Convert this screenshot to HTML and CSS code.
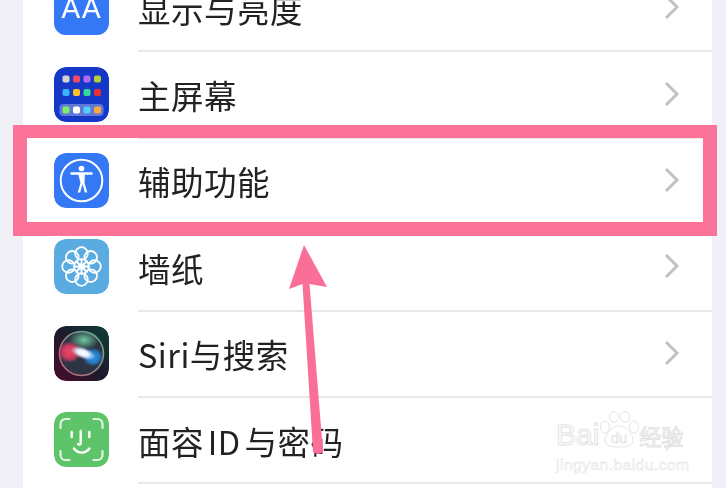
FILE: index.html
```html
<!DOCTYPE html>
<html lang="zh-CN">
<head>
  <meta charset="UTF-8" />
  <meta name="viewport" content="width=device-width, initial-scale=1.0"/>
  <title>设置</title>
  <link rel="stylesheet" href="styles.css">
</head>
<body>
  <div class="list">
    <div class="row">
      <div class="icon icon-display">AA</div>
      <div class="row-body">
        <span class="label">显示与亮度</span>
        <svg class="chevron" viewBox="0 0 16 26"><path d="M2 2l11 11L2 24"/></svg>
      </div>
    </div>
    <div class="row">
      <svg class="icon" viewBox="0 0 55 55">
        <rect width="55" height="55" rx="12" fill="#1638c8"/>
        <rect x="8.500" y="8.500" width="7" height="7" rx="2" fill="#d4d4cc"/>
        <rect x="19" y="8.500" width="7" height="7" rx="2" fill="#f04a68"/>
        <rect x="29.500" y="8.500" width="7" height="7" rx="2" fill="#b068f2"/>
        <rect x="40" y="8.500" width="7" height="7" rx="2" fill="#b4d03a"/>
        <rect x="8.500" y="22" width="7" height="7" rx="2" fill="#38b4f8"/>
        <rect x="19" y="22" width="7" height="7" rx="2" fill="#fcc020"/>
        <rect x="29.500" y="22" width="7" height="7" rx="2" fill="#38d898"/>
        <rect x="40" y="22" width="7" height="7" rx="2" fill="#ea3030"/>
        <rect x="5.500" y="37" width="44" height="12" rx="4" fill="#5f79d8"/>
        <rect x="8.500" y="39.500" width="7" height="7" rx="2" fill="#80ec68"/>
        <rect x="19" y="39.500" width="7" height="7" rx="2" fill="#fff"/>
        <rect x="29.500" y="39.500" width="7" height="7" rx="2" fill="#58ccff"/>
        <rect x="40" y="39.500" width="7" height="7" rx="2" fill="#fca840"/>
      </svg>
      <div class="row-body">
        <span class="label">主屏幕</span>
        <svg class="chevron" viewBox="0 0 16 26"><path d="M2 2l11 11L2 24"/></svg>
      </div>
    </div>
    <div class="row">
      <svg class="icon" viewBox="0 0 55 55">
        <rect width="55" height="55" rx="12" fill="#3478f6"/>
        <circle cx="27.500" cy="27.500" r="20.800" fill="none" stroke="#fff" stroke-width="2"/>
        <circle cx="27.500" cy="15.500" r="2.800" fill="#fff"/>
        <path d="M17.500 20.500h20" fill="none" stroke="#fff" stroke-width="2.400" stroke-linecap="round"/>
        <path d="M24 20h7l-.5 10 2.800 9.500h-2.500l-2.300-8.500-2.300 8.500h-2.500l2.800-9.500z" fill="#fff"/>
      </svg>
      <div class="row-body">
        <span class="label">辅助功能</span>
        <svg class="chevron" viewBox="0 0 16 26"><path d="M2 2l11 11L2 24"/></svg>
      </div>
    </div>
    <div class="row">
      <svg class="icon" viewBox="0 0 55 55">
        <rect width="55" height="55" rx="12" fill="#5aace0"/>
        <g fill="none" stroke="#fff" stroke-width="1.800">
          <circle cx="27.500" cy="14.500" r="6.300"/>
          <circle cx="27.500" cy="40.500" r="6.300"/>
          <circle cx="14.500" cy="27.500" r="6.300"/>
          <circle cx="40.500" cy="27.500" r="6.300"/>
          <circle cx="18.300" cy="18.300" r="6.300"/>
          <circle cx="36.700" cy="18.300" r="6.300"/>
          <circle cx="18.300" cy="36.700" r="6.300"/>
          <circle cx="36.700" cy="36.700" r="6.300"/>
          <path d="M27.500 27.500V19M27.500 27.500V36M27.500 27.500H19M27.500 27.500H36M27.500 27.500L21.500 21.500M27.500 27.500L33.500 21.500M27.500 27.500L21.500 33.500M27.500 27.500L33.500 33.500"/>
        </g>
        <circle cx="27.500" cy="27.500" r="3.200" fill="#fff"/>
      </svg>
      <div class="row-body">
        <span class="label">墙纸</span>
        <svg class="chevron" viewBox="0 0 16 26"><path d="M2 2l11 11L2 24"/></svg>
      </div>
    </div>
    <div class="row">
      <svg class="icon" viewBox="0 0 55 55">
        <defs>
          <linearGradient id="siriBg" x1="0" y1="1" x2="1" y2="0">
            <stop offset="0" stop-color="#4a0c2c"/>
            <stop offset="0.5" stop-color="#1c1a2a"/>
            <stop offset="1" stop-color="#0d4038"/>
          </linearGradient>
          <linearGradient id="siriRing" x1="0" y1="1" x2="1" y2="0">
            <stop offset="0" stop-color="#c85a78"/>
            <stop offset="1" stop-color="#58b890"/>
          </linearGradient>
          <radialGradient id="siriWhite">
            <stop offset="0" stop-color="#fff"/>
            <stop offset="0.45" stop-color="#e8f0ff"/>
            <stop offset="1" stop-color="#cfe0ff" stop-opacity="0"/>
          </radialGradient>
          <radialGradient id="siriPink">
            <stop offset="0" stop-color="#f04868"/>
            <stop offset="0.6" stop-color="#c83a5c"/>
            <stop offset="1" stop-color="#c83a5c" stop-opacity="0"/>
          </radialGradient>
          <radialGradient id="siriBlue">
            <stop offset="0" stop-color="#3098e8"/>
            <stop offset="0.6" stop-color="#2878c0"/>
            <stop offset="1" stop-color="#2878c0" stop-opacity="0"/>
          </radialGradient>
          <radialGradient id="siriGreen">
            <stop offset="0" stop-color="#70c8a0"/>
            <stop offset="1" stop-color="#70c8a0" stop-opacity="0"/>
          </radialGradient>
        </defs>
        <rect width="55" height="55" rx="12" fill="url(#siriBg)"/>
        <circle cx="27.500" cy="27.500" r="22" fill="#2c3444" stroke="url(#siriRing)" stroke-width="1.600"/>
        <ellipse cx="30" cy="14" rx="15" ry="10" fill="url(#siriGreen)"/>
        <ellipse cx="15.500" cy="26" rx="12" ry="11" fill="url(#siriPink)"/>
        <ellipse cx="39" cy="31" rx="10.500" ry="9.500" fill="url(#siriBlue)"/>
        <ellipse cx="29" cy="27" rx="13" ry="6" fill="url(#siriWhite)" transform="rotate(20 29 27)"/>
      </svg>
      <div class="row-body">
        <span class="label">Siri与搜索</span>
        <svg class="chevron" viewBox="0 0 16 26"><path d="M2 2l11 11L2 24"/></svg>
      </div>
    </div>
    <div class="row">
      <svg class="icon" viewBox="0 0 55 55">
        <rect width="55" height="55" rx="12" fill="#5ec46a"/>
        <g fill="none" stroke="#dff5e2" stroke-width="2.200" stroke-linecap="round" stroke-linejoin="round">
          <path d="M6.500 16v-4a5 5 0 0 1 5-5h4M39.500 7h4a5 5 0 0 1 5 5v4M6.500 39v4a5 5 0 0 0 5 5h4M48.500 39v4a5 5 0 0 1-5 5h-4"/>
        </g>
        <g fill="none" stroke="#fff" stroke-width="2.400" stroke-linecap="round" stroke-linejoin="round">
          <path d="M17.700 20v5M35.300 20v5M26.700 19v12a1.500 1.500 0 0 1-2.700 1M20 36.500c4 5.500 11 5.500 15.500 0"/>
        </g>
      </svg>
      <div class="row-body">
        <span class="label label-tight">面容 ID 与密码</span>
        <svg class="chevron chevron-faint" viewBox="0 0 16 26"><path d="M2 2l11 11L2 24"/></svg>
      </div>
    </div>
  </div>

  <div class="highlight"></div>

  <svg class="arrow" viewBox="0 0 726 488">
    <path d="M304 245L327 287L309.500 284L323 452Q318 456 313 452L302.500 284L289 289Z"/>
  </svg>

  <div class="watermark">
    <div class="wm-top">
      <span class="wm-bai">Bai</span>
      <svg class="wm-paw" viewBox="0 0 40 38">
        <g fill="#fff" stroke="#e4e4e6" stroke-width="1">
          <ellipse cx="6" cy="16" rx="4.500" ry="6"/>
          <ellipse cx="15" cy="6" rx="4.500" ry="5.500"/>
          <ellipse cx="26" cy="6" rx="4.500" ry="5.500"/>
          <ellipse cx="35" cy="16" rx="4.500" ry="6"/>
          <path d="M20 15c7 0 14 8 14 14c0 6-6 7-14 7s-14-1-14-7c0-6 7-14 14-14z"/>
        </g>
        <text x="20" y="32" text-anchor="middle" class="wm-du">du</text>
      </svg>
      <span class="wm-cn">经验</span>
    </div>
    <div class="wm-url">jingyan.baidu.com</div>
  </div>
</body>
</html>
```

FILE: styles.css
```css
html, body {
  margin: 0;
  padding: 0;
  height: 100%;
  background: #f0f0f6;
  overflow: hidden;
  font-family: "Noto Sans CJK SC", "Liberation Sans", sans-serif;
}
.list {
  margin: -34px 14px 0 23px;
  padding-bottom: 20px;
  background: #fff;
  filter: blur(0.5px);
}
.row {
  display: flex;
  align-items: center;
  height: 86.4px;
  padding-left: 31px;
}
.icon {
  flex: none;
  width: 55px;
  height: 55px;
  margin-bottom: 3px;
  border-radius: 12px;
}
.icon-display {
  display: flex;
  align-items: center;
  justify-content: center;
  background: #3478f6;
  color: #fff;
  font-family: Roboto, "Liberation Sans", sans-serif;
  font-size: 30px;
  letter-spacing: 1px;
}
.row-body {
  flex: 1;
  align-self: stretch;
  display: flex;
  align-items: center;
  justify-content: space-between;
  margin-left: 29px;
  padding-right: 32px;
  padding-bottom: 2px;
  border-bottom: 2px solid #e8e8ea;
  box-sizing: border-box;
}
.label {
  margin-top: 2px;
  font-size: 32.500px;
  color: #222;
  letter-spacing: 0.5px;
}
.label-tight {
  word-spacing: -4px;
}
.chevron {
  width: 16px;
  height: 26px;
  fill: none;
  stroke: #c2c2c6;
  stroke-width: 3;
}
.chevron-faint {
  stroke: #ececee;
}
.highlight {
  position: absolute;
  left: 13px;
  top: 125px;
  width: 676px;
  height: 84px;
  border: 14px solid #fb7299;
  border-top-width: 13px;
}
.arrow {
  position: absolute;
  left: 0;
  top: 0;
  width: 726px;
  height: 488px;
  fill: #f96f98;
}
.watermark {
  position: absolute;
  left: 556px;
  top: 410px;
  width: 132px;
  color: #fff;
  -webkit-text-stroke: 1px #e2e2e4;
}
.wm-top {
  display: flex;
  align-items: flex-end;
  height: 42px;
}
.wm-bai {
  font-family: "Liberation Sans", sans-serif;
  font-size: 30px;
  line-height: 34px;
}
.wm-paw {
  width: 40px;
  height: 38px;
  margin-bottom: 3px;
}
.wm-du {
  font-family: "Liberation Sans", sans-serif;
  font-size: 15px;
  fill: #fff;
  stroke: #e2e2e4;
  stroke-width: 0.7px;
  -webkit-text-stroke: 0;
}
.wm-cn {
  font-size: 22px;
  line-height: 34px;
}
.wm-url {
  margin-top: 5px;
  font-family: "Liberation Sans", sans-serif;
  font-size: 15.500px;
  line-height: 16px;
  letter-spacing: 0.5px;
  -webkit-text-stroke: 0.5px #e2e2e4;
}
```
